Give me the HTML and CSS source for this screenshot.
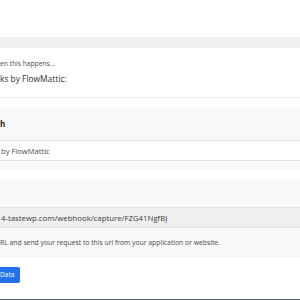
FILE: index.html
```html
<!DOCTYPE html>
<html lang="en">
<head>
    <meta charset="UTF-8">
    <meta name="viewport" content="width=device-width, initial-scale=1.0">
    <title>Webhooks by FlowMattic</title>
    <link rel="stylesheet" href="styles.css">
</head>
<body>
    <div class="page">
        <div class="top-space"></div>
        <div class="band"></div>
        <div class="step-head">
            <div class="step-sub">en this happens...</div>
            <div class="step-title">ks by FlowMattic:</div>
        </div>
        <div class="panel">
            <label class="field-label">h</label>
            <input class="field-input" type="text" value="by FlowMattic">
        </div>
        <div class="panel panel-url">
            <input class="field-input readonly" type="text" value="4-tastewp.com/webhook/capture/FZG41NgfBJ" readonly>
            <p class="help">RL and send your request to this url from your application or website.</p>
        </div>
        <div class="actions">
            <button class="btn-capture">Data</button>
        </div>
        <div class="footer-bar"></div>
    </div>
</body>
</html>
```

FILE: styles.css
```css
html, body {
    margin: 0;
    padding: 0;
    background: #fff;
    overflow: hidden;
}
body {
    font-family: 'Open Sans', sans-serif;
    width: 300px;
    height: 300px;
}
.page {
    margin-left: -20px;
    width: 360px;
}
.top-space {
    height: 37px;
}
.band {
    height: 11px;
    background: #f0f0f0;
}
.step-head {
    padding: 11px 0 11px 20px;
    border-bottom: 1px solid #ececec;
}
.step-sub {
    font-size: 6.7px;
    line-height: 10px;
    color: #4a4a4a;
}
.step-title {
    font-size: 8.4px;
    line-height: 14px;
    margin-top: 3px;
    color: #2e2e2e;
}
.panel {
    background: #f8f8f8;
    margin-top: 10px;
    padding: 10px 0 9px 0;
}
.field-label {
    display: block;
    padding-left: 20px;
    font-size: 8px;
    line-height: 12px;
    font-weight: 700;
    color: #222;
}
.field-input {
    display: block;
    box-sizing: border-box;
    margin: 10px 0 0 10px;
    width: 340px;
    height: 21px;
    padding: 0 0 0 10px;
    border: 1px solid #e2e2e2;
    border-radius: 0;
    background: #fff;
    font-family: 'Open Sans', sans-serif;
    font-size: 7.6px;
    color: #4a4a4a;
    outline: none;
}
.panel-url {
    padding-top: 27px;
}
.panel-url .field-input {
    margin-top: 0;
}
.readonly {
    background: #efefef;
    border-color: #e6e6e6;
    font-size: 7.8px;
    color: #3d3d3d;
}
.help {
    margin: 10px 0 0 0;
    padding-left: 20px;
    font-size: 6.8px;
    line-height: 10px;
    color: #4a4a4a;
}
.actions {
    display: flex;
    margin-top: 10px;
}
.btn-capture {
    margin-left: -10px;
    height: 16px;
    padding: 0 6px 0 30px;
    border: none;
    border-radius: 2px;
    background: #2271ee;
    color: #fff;
    font-family: 'Open Sans', sans-serif;
    font-size: 6.6px;
    line-height: 16px;
}
.footer-bar {
    margin-top: 16px;
    height: 4px;
    background: #4d5a67;
}
```
